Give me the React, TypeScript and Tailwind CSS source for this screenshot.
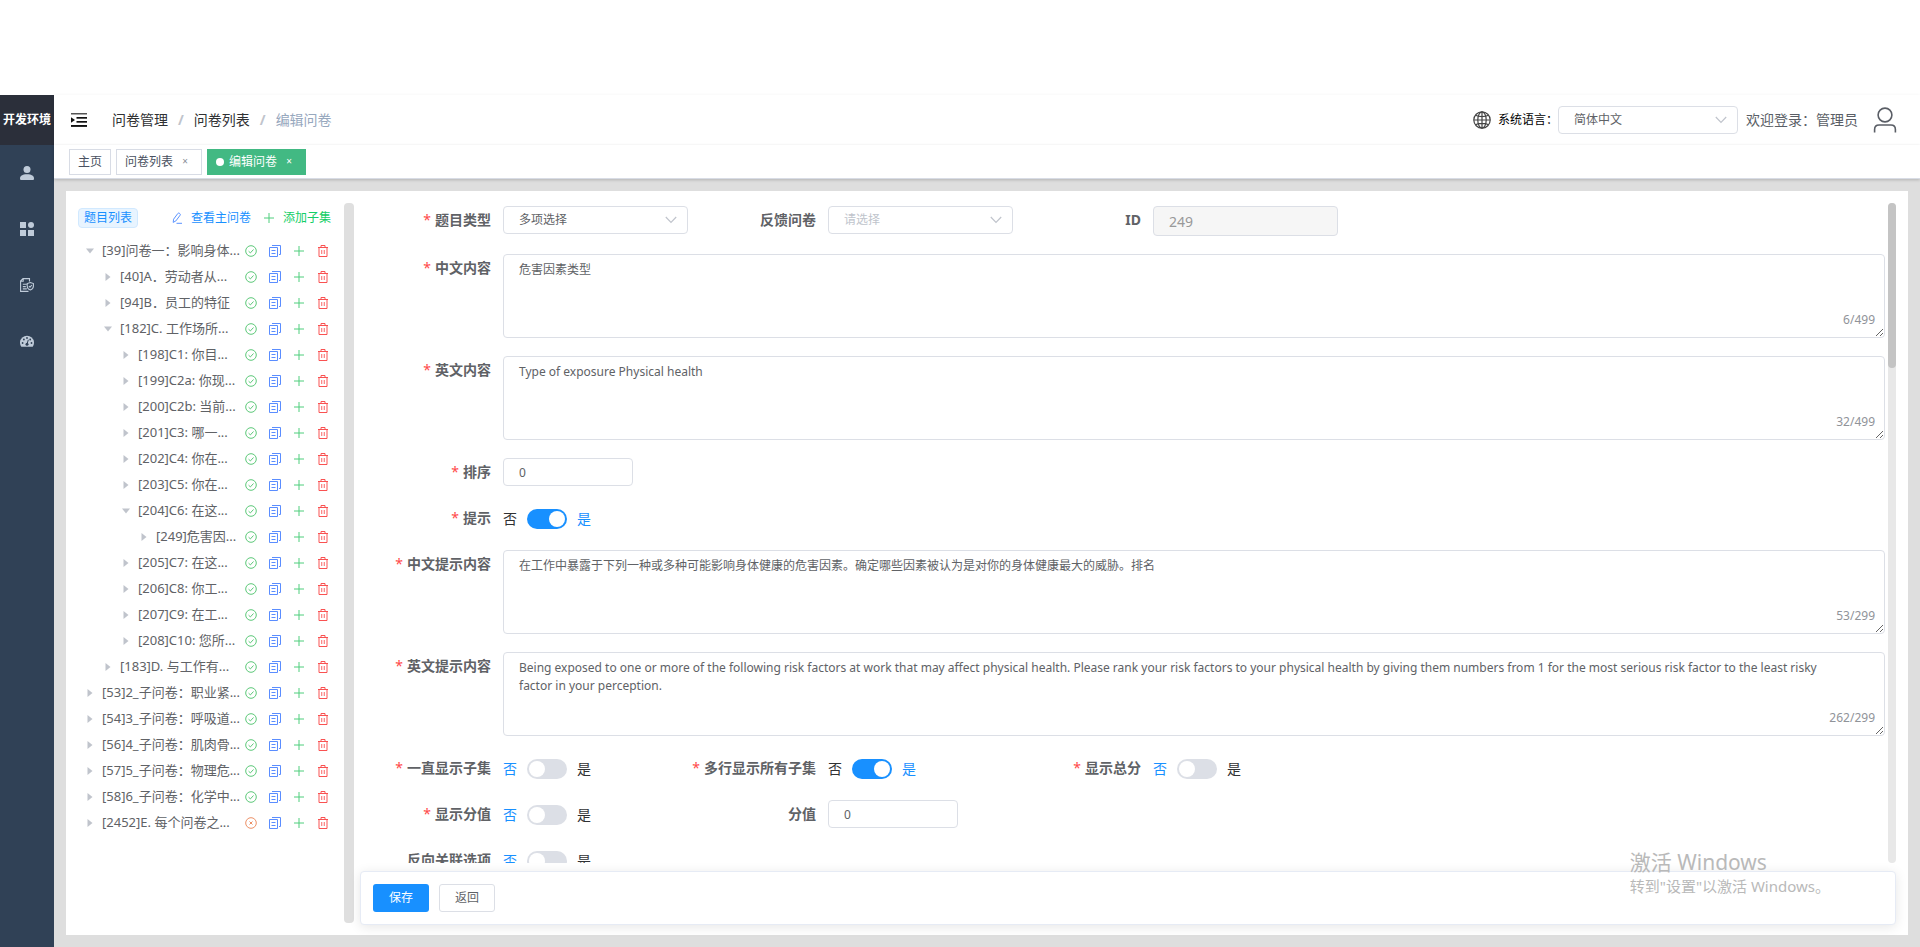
import { useState } from 'react';
import type { ReactNode } from 'react';

type NodeStatus = 'on' | 'off';

interface TreeRow {
  label: string;
  depth: number;
  open?: boolean;
  status?: NodeStatus;
}

const treeRows: TreeRow[] = [
  { label: '[39]问卷一：影响身体...', depth: 0, open: true },
  { label: '[40]A．劳动者从...', depth: 1 },
  { label: '[94]B．员工的特征', depth: 1 },
  { label: '[182]C. 工作场所...', depth: 1, open: true },
  { label: '[198]C1: 你目...', depth: 2 },
  { label: '[199]C2a: 你现...', depth: 2 },
  { label: '[200]C2b: 当前...', depth: 2 },
  { label: '[201]C3: 哪一...', depth: 2 },
  { label: '[202]C4: 你在...', depth: 2 },
  { label: '[203]C5: 你在...', depth: 2 },
  { label: '[204]C6: 在这...', depth: 2, open: true },
  { label: '[249]危害因...', depth: 3 },
  { label: '[205]C7: 在这...', depth: 2 },
  { label: '[206]C8: 你工...', depth: 2 },
  { label: '[207]C9: 在工...', depth: 2 },
  { label: '[208]C10: 您所...', depth: 2 },
  { label: '[183]D. 与工作有...', depth: 1 },
  { label: '[53]2_子问卷：职业紧...', depth: 0 },
  { label: '[54]3_子问卷：呼吸道...', depth: 0 },
  { label: '[56]4_子问卷：肌肉骨...', depth: 0 },
  { label: '[57]5_子问卷：物理危...', depth: 0 },
  { label: '[58]6_子问卷：化学中...', depth: 0 },
  { label: '[2452]E. 每个问卷之...', depth: 0, status: 'off' },
];

const depthPadding = ['pl-0', 'pl-[18px]', 'pl-[36px]', 'pl-[54px]'];

/* ---------- icons ---------- */

const UserSolidIcon = () => (
  <svg viewBox="0 0 14 14" className="size-3.5" fill="currentColor">
    <circle cx="7" cy="3.5" r="3.5" />
    <path d="M0 12.5C0 9.8 2.2 8.2 7 8.2s7 1.6 7 4.3c0 1-.5 1.5-1.500 1.500H1.500C.5 14 0 13.500 0 12.500z" />
  </svg>
);

const GridIcon = () => (
  <svg viewBox="0 0 14 14" className="size-3.5" fill="currentColor">
    <rect x="0" y="0" width="6" height="6" />
    <circle cx="11" cy="3" r="3" />
    <rect x="0" y="8" width="6" height="6" />
    <rect x="8" y="8" width="6" height="6" />
  </svg>
);

const DocCheckIcon = () => (
  <svg viewBox="0 0 14 14" className="size-3.5" fill="none" stroke="currentColor" strokeWidth="1.1">
    <path d="M8.500 13.400H.6V3L3 .6h6.500v3M3.200.6v2.600H.6" />
    <path d="M2.800 6.300h4M2.800 8.600h3M2.800 10.900h4" />
    <path d="M10.300 4.500l3.100 1.100v2.600c0 1.700-1.200 3-3.100 3.800-1.900-.8-3.100-2.100-3.100-3.800V5.600z" />
    <path d="M8.900 8l1.100 1.200 1.900-2.200" />
  </svg>
);

const DashboardIcon = () => (
  <svg viewBox="0 0 14 14" className="size-3.5">
    <path d="M1.300 12.800A7 7 0 1 1 12.700 12.800z" fill="currentColor" />
    <g fill="#304156">
      <circle cx="2.600" cy="9" r=".9" />
      <circle cx="3.900" cy="5.500" r=".9" />
      <circle cx="7" cy="4" r=".9" />
      <circle cx="10.200" cy="5.500" r=".9" />
      <circle cx="11.500" cy="9" r=".9" />
      <circle cx="7" cy="10.300" r="1.500" />
    </g>
    <path d="M7 10.300L8.300 5.800" stroke="#304156" strokeWidth="1" />
  </svg>
);

const HamburgerIcon = () => (
  <svg viewBox="0 0 16 14" className="h-3.5 w-4" fill="#111">
    <rect x="0" y="0" width="16" height="1.500" fill="#555" />
    <rect x="5.500" y="4" width="10.500" height="1.700" />
    <rect x="5.500" y="8" width="10.500" height="1.700" />
    <rect x="0" y="12" width="16" height="1.900" />
    <path d="M0 4.200L4 7 0 9.800z" />
  </svg>
);

const GlobeIcon = () => (
  <svg viewBox="0 0 18 18" className="size-[18px]" fill="none" stroke="#444" strokeWidth="1.200">
    <circle cx="9" cy="9" r="8.200" />
    <ellipse cx="9" cy="9" rx="4.200" ry="8.200" />
    <path d="M9 .8v16.400M.8 9h16.400M2.500 4.300c3.500 1.700 9.500 1.700 13 0M2.500 13.700c3.500-1.700 9.500-1.700 13 0" />
  </svg>
);

const AvatarIcon = () => (
  <svg viewBox="0 0 24 26" className="h-[26px] w-6" fill="none" stroke="#5a5e66" strokeWidth="1.600">
    <circle cx="12" cy="8" r="6.900" />
    <path d="M1.600 25.500v-3c0-3 1.700-4.500 4.500-4.500h11.800c2.800 0 4.500 1.500 4.500 4.500v3" />
  </svg>
);

const ChevronIcon = () => (
  <svg
    viewBox="0 0 12 8"
    className="pointer-events-none absolute right-[11px] top-[10px] h-2 w-3"
    fill="none"
    stroke="#c0c4cc"
    strokeWidth="1.200"
  >
    <path d="M.8 1L6 6.400 11.200 1" />
  </svg>
);

const EditIcon = () => (
  <svg viewBox="0 0 12 12" className="size-3" fill="none" stroke="#5a93ff">
    <path d="M2.600 7.200L6.800 1.500c.3-.5.9-.6 1.400-.3l.7.500c.5.300.6.900.300 1.400L4.900 8.900l-2.700 1.500z" />
    <path d="M5.500 11.300H11" />
  </svg>
);

const PlusIcon = () => (
  <svg viewBox="0 0 12 12" className="size-3" fill="none" stroke="#4fce7d">
    <path d="M6 1v10M1 6h10" />
  </svg>
);

const CheckCircleIcon = () => (
  <svg viewBox="0 0 12 12" className="size-3" fill="none" stroke="#5cc878">
    <circle cx="6" cy="6" r="5.300" />
    <path d="M3.600 6.200l1.800 1.700 3.100-3.400" />
  </svg>
);

const CloseCircleIcon = () => (
  <svg viewBox="0 0 12 12" className="size-3" fill="none" stroke="#ec9066">
    <circle cx="6" cy="6" r="5.300" />
    <path d="M4.500 4.500l3 3M7.500 4.500l-3 3" />
  </svg>
);

const CopyIcon = () => (
  <svg viewBox="0 0 12 12" className="size-3" fill="none" stroke="#5a8dff">
    <path d="M.5 2.500h8v9h-8z" />
    <path d="M3 .5h8.500V9.500H10" />
    <path d="M2.500 5.500h4M2.500 8.500h4" />
  </svg>
);

const TrashIcon = () => (
  <svg viewBox="0 0 12 12" className="size-3" fill="none" stroke="#f95252">
    <path d="M1 2.500h10M4 2.500v-2h4v2M2 2.500v9h8v-9" />
    <path d="M4.500 5v4M7.500 5v4" stroke="#fb8a8a" />
    <path d="M6 5v4" stroke="#fcb5b5" />
  </svg>
);

/* ---------- form pieces ---------- */

interface FieldProps {
  label: string;
  htmlFor: string;
  required?: boolean;
  className?: string;
  children: ReactNode;
}

const Field = ({ label, htmlFor, required, className = 'w-[325px] shrink-0', children }: FieldProps) => (
  <div className={`flex items-start ${className}`}>
    <label
      htmlFor={htmlFor}
      className="w-[140px] shrink-0 whitespace-nowrap pr-3 text-right text-sm font-bold leading-7 text-[#606266]"
    >
      {required && <span className="mr-1 font-normal text-[#ff4949]">*</span>}
      {label}
    </label>
    {children}
  </div>
);

interface SelectBoxProps {
  id: string;
  options: string[];
  width: string;
  placeholder?: boolean;
}

const SelectBox = ({ id, options, width, placeholder }: SelectBoxProps) => (
  <div className={`relative ${width}`}>
    <select
      id={id}
      className={`h-7 w-full appearance-none rounded border border-[#dcdfe6] bg-white px-[15px] text-xs outline-none ${
        placeholder ? 'text-[#c0c4cc]' : 'text-[#606266]'
      }`}
    >
      {options.map((option) => (
        <option key={option}>{option}</option>
      ))}
    </select>
    <ChevronIcon />
  </div>
);

const TextArea = ({ id, text, max }: { id: string; text: string; max: number }) => {
  const [value, setValue] = useState(text);
  return (
    <div className="relative flex-1">
      <textarea
        id={id}
        value={value}
        maxLength={max}
        onChange={(e) => setValue(e.target.value)}
        className="block h-[84px] w-full rounded border border-[#dcdfe6] bg-white py-1.5 pl-[15px] pr-12 text-xs leading-[18px] text-[#606266] outline-none"
      />
      <span className="absolute bottom-2.5 right-2.5 text-xs leading-4 text-[#909399]">
        {value.length}/{max}
      </span>
    </div>
  );
};

const Toggle = ({ id, initial = false }: { id: string; initial?: boolean }) => {
  const [on, setOn] = useState(initial);
  return (
    <div className="flex h-7 items-center gap-2.5 pt-0.5 text-sm leading-5">
      <span className={on ? 'text-[#303133]' : 'text-[#1890ff]'}>否</span>
      <input
        id={id}
        type="checkbox"
        role="switch"
        checked={on}
        onChange={(e) => setOn(e.target.checked)}
        className="h-5 w-10 appearance-none rounded-full bg-[#dcdfe6] p-0.5 before:block before:size-4 before:rounded-full before:bg-white checked:bg-[#1890ff] checked:before:translate-x-5"
      />
      <span className={on ? 'text-[#1890ff]' : 'text-[#303133]'}>是</span>
    </div>
  );
};

const NumberInput = ({ id }: { id: string }) => (
  <input
    id={id}
    defaultValue="0"
    className="h-7 w-[130px] rounded border border-[#dcdfe6] bg-white px-[15px] text-xs text-[#606266] outline-none"
  />
);

/* ---------- layout ---------- */

const Sidebar = () => (
  <aside className="flex w-[54px] shrink-0 flex-col bg-[#304156] text-[#bfcbd9]">
    <h1 className="flex h-[50px] items-center justify-center whitespace-nowrap bg-[#2b2f3a] text-xs font-bold text-white">
      开发环境
    </h1>
    {[UserSolidIcon, GridIcon, DocCheckIcon, DashboardIcon].map((Icon, i) => (
      <button key={i} className="flex h-14 items-center justify-center">
        <Icon />
      </button>
    ))}
  </aside>
);

const Header = () => (
  <header className="flex h-[50px] shrink-0 items-center bg-white pl-[17px] pr-[23px] shadow-[0_1px_4px_rgba(0,21,41,0.08)]">
    <button aria-label="menu">
      <HamburgerIcon />
    </button>
    <nav className="ml-[25px] flex items-center gap-2.5 text-sm text-[#303133]">
      <a href="#manage">问卷管理</a>
      <span className="font-bold text-[#c0c4cc]">/</span>
      <a href="#list">问卷列表</a>
      <span className="font-bold text-[#c0c4cc]">/</span>
      <span className="text-[#97a8be]">编辑问卷</span>
    </nav>
    <div className="ml-auto flex items-center">
      <GlobeIcon />
      <label htmlFor="lang" className="ml-[7px] text-xs text-black">
        系统语言：
      </label>
      <SelectBox id="lang" options={['简体中文', 'English']} width="w-[180px]" />
      <span className="ml-2 mr-[15px] text-sm text-[#5a5e66]">欢迎登录：管理员</span>
      <AvatarIcon />
    </div>
  </header>
);

const TagsView = () => (
  <div className="z-10 flex h-[34px] shrink-0 items-center gap-[5px] border-b border-[#d8dce5] bg-white pl-[15px] text-xs text-[#495060] shadow-[0_1px_3px_rgba(0,0,0,0.2)]">
    <a href="#home" className="flex h-[26px] items-center border border-[#d8dce5] px-2">
      主页
    </a>
    <a href="#list" className="flex h-[26px] items-center border border-[#d8dce5] px-2">
      问卷列表
      <span className="ml-1 w-4 text-center text-[10px] text-[#8a8f99]">×</span>
    </a>
    <a href="#edit" className="flex h-[26px] items-center border border-[#42b983] bg-[#42b983] px-2 text-white">
      <span className="mr-[5px] size-2 rounded-full bg-white" />
      编辑问卷
      <span className="ml-1 w-4 text-center text-[10px]">×</span>
    </a>
  </div>
);

const TreeItem = ({ row }: { row: TreeRow }) => (
  <li className="flex h-[26px] items-center pr-[3px] text-[13px] text-[#606266]">
    <div className={`flex min-w-0 flex-1 items-center whitespace-nowrap ${depthPadding[row.depth]}`}>
      <span className="flex w-6 shrink-0 items-center justify-center">
        <svg viewBox="0 0 8 8" className={`size-2 ${row.open ? 'rotate-90' : ''}`} fill="#c0c4cc">
          <path d="M1.500 0l5 4-5 4z" />
        </svg>
      </span>
      {row.label}
    </div>
    <div className="flex gap-3">
      <button aria-label="status">{row.status === 'off' ? <CloseCircleIcon /> : <CheckCircleIcon />}</button>
      <button aria-label="copy">
        <CopyIcon />
      </button>
      <button aria-label="add">
        <PlusIcon />
      </button>
      <button aria-label="delete">
        <TrashIcon />
      </button>
    </div>
  </li>
);

const QuestionTree = () => (
  <section className="w-[254px] shrink-0">
    <div className="flex h-[29px] items-center pr-px text-xs">
      <span className="flex h-5 items-center rounded border border-[#d1e9ff] bg-[#e8f4ff] px-[5px] text-[#1890ff]">
        题目列表
      </span>
      <button className="ml-auto flex items-center gap-2 text-[#1890ff]">
        <EditIcon />
        查看主问卷
      </button>
      <button className="ml-3 flex items-center gap-2 text-[#13ce66]">
        <PlusIcon />
        添加子集
      </button>
    </div>
    <ul className="mt-1.5">
      {treeRows.map((row) => (
        <TreeItem key={row.label} row={row} />
      ))}
    </ul>
  </section>
);

const QuestionForm = () => (
  <div className="flex min-h-0 flex-1 gap-[3px]">
    <form className="flex min-w-0 flex-1 flex-col gap-[18px] overflow-hidden pl-[3px] pt-[3px]">
      <div className="flex">
        <Field label="题目类型" htmlFor="type" required>
          <SelectBox id="type" options={['多项选择', '单项选择']} width="w-[185px]" />
        </Field>
        <Field label="反馈问卷" htmlFor="feedback">
          <SelectBox id="feedback" options={['请选择']} width="w-[185px]" placeholder />
        </Field>
        <Field label="ID" htmlFor="qid">
          <input
            id="qid"
            disabled
            defaultValue="249"
            className="h-[30px] w-[185px] rounded border border-[#dcdfe6] bg-[#f6f6f6] px-[15px] text-sm text-[#999]"
          />
        </Field>
      </div>
      <Field label="中文内容" htmlFor="zh" required className="w-full">
        <TextArea id="zh" text="危害因素类型" max={499} />
      </Field>
      <Field label="英文内容" htmlFor="en" required className="w-full">
        <TextArea id="en" text="Type of exposure Physical health" max={499} />
      </Field>
      <Field label="排序" htmlFor="sort" required>
        <NumberInput id="sort" />
      </Field>
      <Field label="提示" htmlFor="tip" required>
        <Toggle id="tip" initial />
      </Field>
      <Field label="中文提示内容" htmlFor="tip-zh" required className="w-full">
        <TextArea
          id="tip-zh"
          text="在工作中暴露于下列一种或多种可能影响身体健康的危害因素。确定哪些因素被认为是对你的身体健康最大的威胁。排名"
          max={299}
        />
      </Field>
      <Field label="英文提示内容" htmlFor="tip-en" required className="w-full">
        <TextArea
          id="tip-en"
          text="Being exposed to one or more of the following risk factors at work that may affect physical health. Please rank your risk factors to your physical health by giving them numbers from 1 for the most serious risk factor to the least risky factor in your perception."
          max={299}
        />
      </Field>
      <div className="flex">
        <Field label="一直显示子集" htmlFor="always" required>
          <Toggle id="always" />
        </Field>
        <Field label="多行显示所有子集" htmlFor="multi" required>
          <Toggle id="multi" initial />
        </Field>
        <Field label="显示总分" htmlFor="total" required>
          <Toggle id="total" />
        </Field>
      </div>
      <div className="flex">
        <Field label="显示分值" htmlFor="show-score" required>
          <Toggle id="show-score" />
        </Field>
        <Field label="分值" htmlFor="score">
          <NumberInput id="score" />
        </Field>
      </div>
      <Field label="反向关联选项" htmlFor="reverse">
        <Toggle id="reverse" />
      </Field>
    </form>
    <div className="w-2 shrink-0 rounded bg-[#e8e8e8]">
      <div className="h-1/4 rounded bg-[#c4c4c4]" />
    </div>
  </div>
);

const App = () => (
  <div className="flex h-screen flex-col bg-white pt-[95px] font-['Noto_Sans','Noto_Sans_CJK_SC',sans-serif]">
    <div className="flex min-h-0 flex-1">
      <Sidebar />
      <div className="flex min-w-0 flex-1 flex-col bg-[#dedede]">
        <Header />
        <TagsView />
        <main className="m-3 flex min-h-0 flex-1 bg-white px-3 pb-2.5 pt-3">
          <QuestionTree />
          <div className="mb-0.5 ml-3 mr-1.5 w-2.5 shrink-0 rounded bg-[#dfdfdf]" />
          <section className="flex min-w-0 flex-1 flex-col gap-2">
            <QuestionForm />
            <div className="flex shrink-0 gap-2.5 rounded border border-[#e6ebf5] bg-white p-3 shadow-[0_2px_12px_rgba(0,0,0,0.1)]">
              <button className="h-7 w-14 rounded-[3px] bg-[#1890ff] text-xs text-white">保存</button>
              <button className="h-7 w-14 rounded-[3px] border border-[#dcdfe6] bg-white text-xs text-[#606266]">
                返回
              </button>
            </div>
          </section>
        </main>
      </div>
    </div>
    <div className="pointer-events-none absolute bottom-[51px] right-[90px] z-20 text-[#b9b9b9]">
      <p className="text-[21px] leading-7">激活 Windows</p>
      <p className="text-[15px] leading-5">转到"设置"以激活 Windows。</p>
    </div>
  </div>
);

export default App;
